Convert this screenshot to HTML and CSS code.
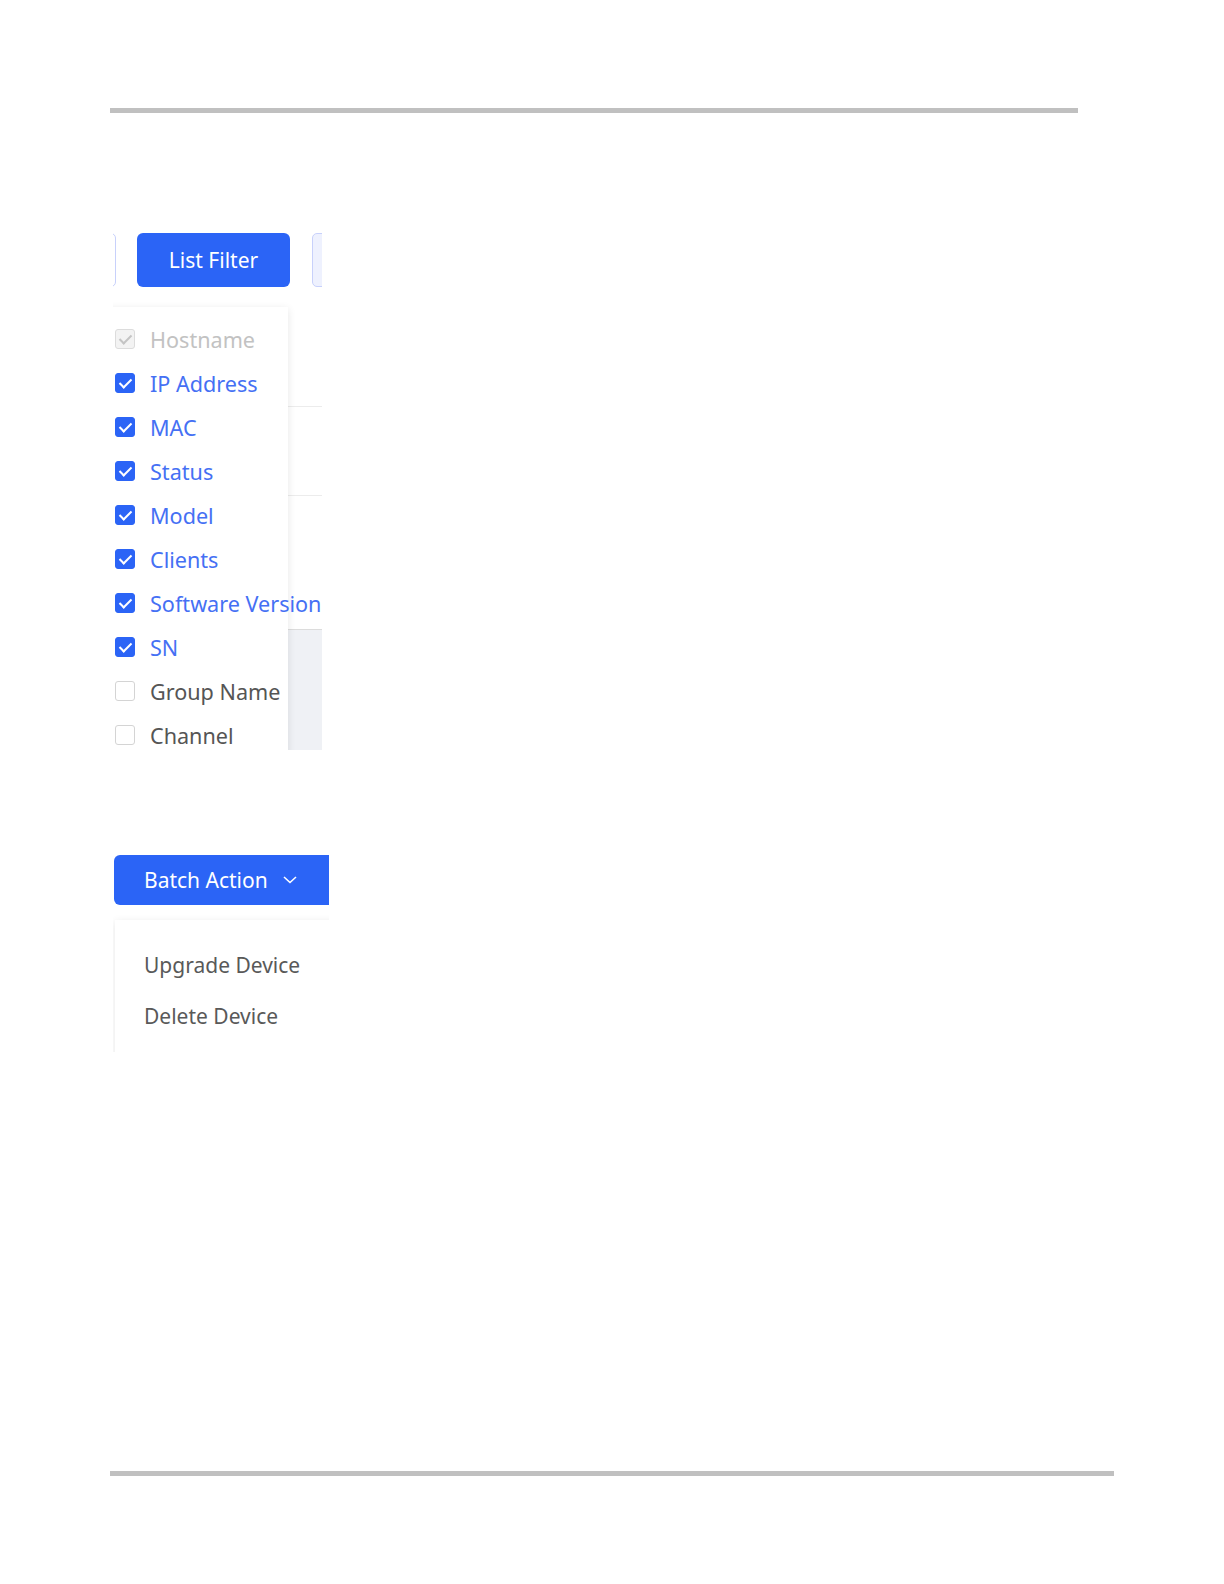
FILE: index.html
```html
<!DOCTYPE html>
<html lang="en">
<head>
    <meta charset="UTF-8">
    <meta name="viewport" content="width=device-width, initial-scale=1.0">
    <title>Device List Filter</title>
    <link rel="stylesheet" href="styles.css">
</head>
<body>

    <div class="rule rule-top"></div>

    <section class="crop crop-filter">
        <div class="toolbar">
            <span class="btn-edge btn-edge-left"></span>
            <button type="button" class="btn-primary btn-filter">List Filter</button>
            <span class="btn-edge btn-edge-right"></span>
        </div>

        <div class="table-behind">
            <div class="trow trow-a"></div>
            <div class="trow trow-b"></div>
            <div class="trow trow-c"></div>
            <div class="trow trow-foot"></div>
        </div>

        <div class="filter-panel">
            <label class="check-row disabled"><span class="box"></span>Hostname</label>
            <label class="check-row checked"><span class="box"></span>IP Address</label>
            <label class="check-row checked"><span class="box"></span>MAC</label>
            <label class="check-row checked"><span class="box"></span>Status</label>
            <label class="check-row checked"><span class="box"></span>Model</label>
            <label class="check-row checked"><span class="box"></span>Clients</label>
            <label class="check-row checked"><span class="box"></span>Software Version</label>
            <label class="check-row checked"><span class="box"></span>SN</label>
            <label class="check-row"><span class="box"></span>Group Name</label>
            <label class="check-row"><span class="box"></span>Channel</label>
        </div>
    </section>

    <section class="crop crop-batch">
        <button type="button" class="btn-primary btn-batch">
            Batch Action
            <svg class="chevron" width="14" height="8" viewBox="0 0 14 8">
                <polyline points="1,1 7,6.5 13,1" fill="none" stroke="#fff" stroke-width="1.6"/>
            </svg>
        </button>
        <ul class="batch-menu">
            <li>Upgrade Device</li>
            <li>Delete Device</li>
        </ul>
    </section>

    <div class="rule rule-bottom"></div>

</body>
</html>
```

FILE: styles.css
```css
body {
    margin: 0;
    font-family: "Noto Sans", "Open Sans", sans-serif;
    background: #fff;
}

.rule {
    height: 5px;
    background: #c0c0c0;
    margin-left: 110px;
}

.rule-top {
    margin-top: 108px;
    width: 968px;
}

.rule-bottom {
    margin-top: 419px;
    width: 1004px;
}

.crop {
    position: relative;
    overflow: hidden;
}

/* list filter screenshot */
.crop-filter {
    margin: 120px 0 0 113px;
    width: 209px;
    height: 517px;
}

.toolbar {
    display: flex;
    height: 54px;
}

.btn-edge {
    flex-shrink: 0;
    box-sizing: border-box;
    border: 1px solid #c8d1fb;
    border-radius: 5px;
}

.btn-edge-left {
    width: 40px;
    margin-left: -37px;
}

.btn-edge-right {
    width: 40px;
    margin-left: 22px;
    background: #eef1fe;
}

.btn-primary {
    border: none;
    border-radius: 6px;
    background: #2b64f6;
    color: #fff;
    font-family: inherit;
    font-size: 21px;
    padding: 0;
}

.btn-filter {
    flex-shrink: 0;
    width: 153px;
    margin-left: 21px;
}

.table-behind {
    margin-top: 14px;
}

.trow {
    border-bottom: 1px solid #ececec;
}

.trow-a { height: 105px; }
.trow-b { height: 88px; }
.trow-c { height: 133px; border-bottom-color: #dcdcdc; }

.trow-foot {
    height: 130px;
    background: #eff1f5;
    border-bottom: none;
}

.filter-panel {
    position: absolute;
    left: -20px;
    top: 74px;
    width: 195px;
    bottom: -20px;
    box-sizing: border-box;
    padding: 10px 0 0 22px;
    background: #fff;
    box-shadow: 0 2px 8px rgba(0, 0, 0, 0.1);
}

.check-row {
    display: flex;
    align-items: center;
    height: 44px;
    font-size: 21.6px;
    color: #555;
    white-space: nowrap;
}

.box {
    flex-shrink: 0;
    width: 20px;
    height: 20px;
    box-sizing: border-box;
    margin-right: 15px;
    border: 1px solid #d4d4d4;
    border-radius: 3px;
    background: #fff;
    position: relative;
}

.check-row.checked {
    color: #4570f4;
}

.check-row.checked .box {
    background: #2b64f6;
    border-color: #2b64f6;
}

.check-row.disabled {
    color: #c2c2c2;
}

.check-row.disabled .box {
    background: #f3f3f3;
    border-color: #dcdcdc;
}

.check-row.checked .box::after,
.check-row.disabled .box::after {
    content: "";
    position: absolute;
    left: 6px;
    top: 2px;
    width: 5px;
    height: 10px;
    border: solid #fff;
    border-width: 0 2px 2px 0;
    transform: rotate(45deg);
}

.check-row.disabled .box::after {
    border-color: #c4c4c4;
}

/* batch action screenshot */
.crop-batch {
    margin: 105px 0 0 113px;
    width: 216px;
    height: 197px;
}

.btn-batch {
    display: flex;
    align-items: center;
    width: 260px;
    height: 50px;
    margin-left: 1px;
    padding-left: 30px;
    text-align: left;
}

.chevron {
    margin-left: 15px;
}

.batch-menu {
    position: absolute;
    top: 65px;
    left: 2px;
    width: 260px;
    height: 150px;
    margin: 0;
    padding: 20px 0 0 29px;
    list-style: none;
    background: #fff;
    box-shadow: 0 2px 8px rgba(0, 0, 0, 0.1);
}

.batch-menu li {
    height: 51px;
    line-height: 51px;
    font-size: 21px;
    color: #595959;
}
```
